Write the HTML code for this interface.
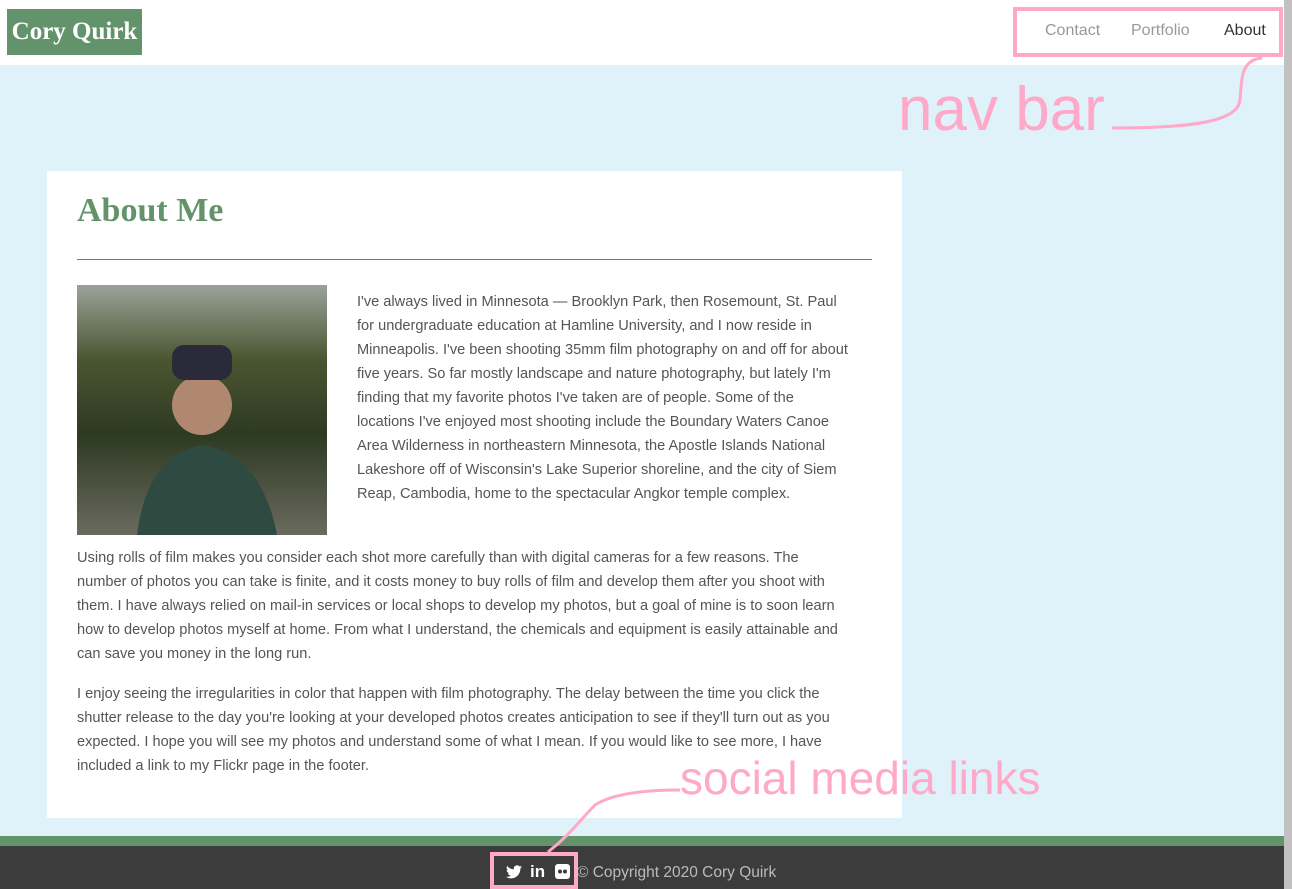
<!DOCTYPE html>
<html><head><style>
*{margin:0;padding:0;box-sizing:border-box}
body{width:1292px;height:889px;overflow:hidden;background:#dff2f9;font-family:"Liberation Sans",sans-serif;position:relative}
.hdr{position:absolute;left:0;top:0;width:1284px;height:65px;background:#fff}
.logo{position:absolute;left:7px;top:9px;width:135px;height:46px;background:#63936a;color:#fff;font-family:"Liberation Serif",serif;font-weight:bold;font-size:25px;line-height:46px;text-align:center}
.nav{position:absolute;top:22px;font-size:16px;color:#999}
.sb{position:absolute;left:1284px;top:0;width:8px;height:889px;background:#c1c1c1}
.card{position:absolute;left:47px;top:171px;width:855px;height:647px;background:#fff}
h1{position:absolute;left:30px;top:21px;font-family:"Liberation Serif",serif;color:#63936a;font-size:34px;font-weight:bold}
.hr{position:absolute;left:30px;top:88px;width:795px;height:1px;background:#777}
.photo{position:absolute;left:30px;top:114px;width:250px;height:250px;background:linear-gradient(180deg,#9aa39a 0%,#4a5530 30%,#2d3a22 60%,#6b6a5e 100%)}
.t{position:absolute;font-size:14.6px;line-height:24px;color:#555;font-weight:300}
.green{position:absolute;left:0;top:836px;width:1284px;height:10px;background:#63936a}
.foot{position:absolute;left:0;top:846px;width:1284px;height:43px;background:#3c3c3c;color:#bbb;font-size:15.5px}
.pink{position:absolute;border:4px solid #ffa8c8}
.ann{position:absolute;color:#ffa8c8;font-family:"Liberation Sans",sans-serif}
</style></head><body>
<div class="hdr">
<div class="logo">Cory Quirk</div>
<div class="nav" style="left:1045px">Contact</div>
<div class="nav" style="left:1131px">Portfolio</div>
<div class="nav" style="left:1224px;color:#333">About</div>
</div>
<div class="sb"></div>
<div class="card">
<h1>About Me</h1>
<div class="hr"></div>
<div class="photo"><svg width="250" height="250"><circle cx="125" cy="120" r="30" fill="#b08870"/><rect x="95" y="60" width="60" height="35" rx="12" fill="#2a2a3a"/><path d="M60 250 Q70 170 125 160 Q185 170 200 250Z" fill="#2f4a40"/></svg></div>
<div class="t" style="left:310px;top:119px;width:498px">I've always lived in Minnesota — Brooklyn Park, then Rosemount, St. Paul<br>for undergraduate education at Hamline University, and I now reside in Minneapolis. I've been shooting 35mm film photography on and off for about five years. So far mostly landscape and nature photography, but lately I'm finding that my favorite photos I've taken are of people. Some of the locations I've enjoyed most shooting include the Boundary Waters Canoe Area Wilderness in northeastern Minnesota, the Apostle Islands National Lakeshore off of Wisconsin's Lake Superior shoreline, and the city of Siem Reap, Cambodia, home to the spectacular Angkor temple complex.</div>
<div class="t" style="left:30px;top:375px;width:775px">Using rolls of film makes you consider each shot more carefully than with digital cameras for a few reasons. The number of photos you can take is finite, and it costs money to buy rolls of film and develop them after you shoot with them. I have always relied on mail-in services or local shops to develop my photos, but a goal of mine is to soon learn how to develop photos myself at home. From what I understand, the chemicals and equipment is easily attainable and can save you money in the long run.</div>
<div class="t" style="left:30px;top:511px;width:788px">I enjoy seeing the irregularities in color that happen with film photography. The delay between the time you click the shutter release to the day you're looking at your developed photos creates anticipation to see if they'll turn out as you expected. I hope you will see my photos and understand some of what I mean. If you would like to see more, I have included a link to my Flickr page in the footer.</div>
</div>
<div class="green"></div>
<div class="foot">
<svg style="position:absolute;left:506px;top:19px" width="16" height="14" viewBox="0 0 24 20"><path fill="#fff" d="M24 2.4a10 10 0 0 1-2.8.8A5 5 0 0 0 23.3.4a10 10 0 0 1-3.1 1.2A4.9 4.9 0 0 0 11.8 6 14 14 0 0 1 1.7.9a4.9 4.9 0 0 0 1.5 6.6A4.9 4.9 0 0 1 1 6.9a4.9 4.9 0 0 0 3.9 4.8 5 5 0 0 1-2.2.1 4.9 4.9 0 0 0 4.6 3.4A9.9 9.9 0 0 1 0 17.3 14 14 0 0 0 7.5 19.5c9 0 14-7.5 14-14v-.6A10 10 0 0 0 24 2.4z"/></svg>
<div style="position:absolute;left:530px;top:16px;color:#fff;font-weight:bold;font-size:17px">in</div>
<svg style="position:absolute;left:555px;top:18px" width="15" height="15"><rect width="15" height="15" rx="3" fill="#fff"/><circle cx="5" cy="7.5" r="2" fill="#3c3c3c"/><circle cx="10" cy="7.5" r="2" fill="#3c3c3c"/></svg>
<div style="position:absolute;left:577px;top:18px">© Copyright 2020 Cory Quirk</div>
</div>
<div class="pink" style="left:1013px;top:7px;width:270px;height:50px"></div>
<div class="pink" style="left:490px;top:852px;width:88px;height:37px"></div>
<div class="ann" style="left:898px;top:74px;font-size:62px">nav bar</div>
<div class="ann" style="left:680px;top:751px;font-size:46px">social media links</div>
<svg style="position:absolute;left:0;top:0" width="1292" height="889"><path d="M1262 58 C1240 60 1242 80 1240 100 C1238 120 1200 128 1112 128" stroke="#ffa8c8" stroke-width="3" fill="none"/><path d="M680 790 C640 790 610 795 595 805 C580 820 570 835 548 852" stroke="#ffa8c8" stroke-width="3" fill="none"/></svg>
</body></html>
